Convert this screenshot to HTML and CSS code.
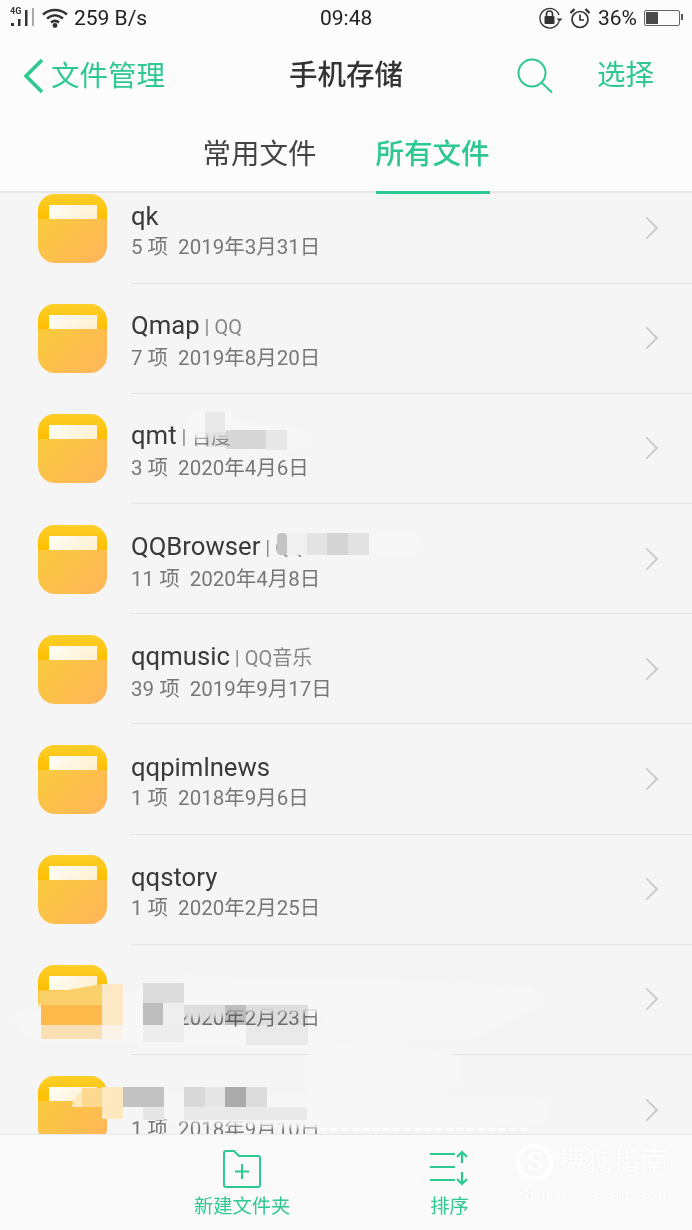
FILE: index.html
```html
<!DOCTYPE html>
<html lang="zh-CN">

<head>
    <meta charset="UTF-8">
    <meta name="viewport" content="width=device-width, initial-scale=1.0">
    <title>手机存储</title>

    <link rel="stylesheet" href="styles.css">
</head>

<body>
    <div class="page">
        <header class="top">
            <div class="status">
                <div class="status-left">
                    <svg width="26" height="22" viewBox="0 0 26 22">
                        <text x="0" y="7" class="net">4G</text>
                        <rect x="1" y="16" width="3" height="3" fill="#333"/>
                        <rect x="8" y="12" width="2.500" height="7" fill="#333"/>
                        <rect x="15" y="3" width="2.500" height="16" fill="#333"/>
                        <rect x="22" y="1" width="2" height="18" fill="#aaa"/>
                    </svg>
                    <svg width="26" height="20" viewBox="0 0 26 20" fill="none" stroke="#333" stroke-width="2.500">
                        <path d="M1 6.500C8 .5 18 .5 25 6.500"/>
                        <path d="M5 10.500C10 6.500 16 6.500 21 10.500"/>
                        <path d="M9 14.500C11.500 12.500 14.500 12.500 17 14.500"/>
                        <circle cx="13" cy="17.500" r="1.200" fill="#333"/>
                    </svg>
                    <span>259 B/s</span>
                </div>
                <span class="clock">09:48</span>
                <div class="status-right">
                    <svg class="ico-lock" width="24" height="22" viewBox="0 0 24 22" fill="none" stroke="#333" stroke-width="1.300">
                        <path d="M20 14.500A9.800 9.800 0 1 1 20 8"/>
                        <path d="M17.500 11.500h6l-3 3.200z" fill="#333" stroke="none"/>
                        <rect x="5.500" y="9" width="10" height="8" rx="1" fill="#333" stroke="none"/>
                        <path d="M7.500 9V7a3 3 0 0 1 6 0V9" stroke-width="1.600"/>
                    </svg>
                    <svg class="ico-alarm" width="22" height="22" viewBox="0 0 22 22" fill="none" stroke="#333" stroke-width="1.700">
                        <circle cx="11" cy="12.500" r="8"/>
                        <path d="M11 7.500v5.500h4"/>
                        <path d="M1.500 6L5.500 2M20.500 6L16.500 2" stroke-width="2.400"/>
                    </svg>
                    <span class="battery-text">36%</span>
                    <div class="battery">
                        <div class="battery-level"></div>
                    </div>
                </div>
            </div>

            <nav class="nav">
                <div class="back">
                    <svg width="22" height="36" viewBox="0 0 22 36" fill="none" stroke="#2ec890" stroke-width="3.600">
                        <path d="M20 2L4 18L20 34"/>
                    </svg>
                    <span>文件管理</span>
                </div>
                <h1 class="title">手机存储</h1>
                <div class="actions">
                    <svg width="36" height="36" viewBox="0 0 36 36" fill="none" stroke="#2ec890" stroke-width="2">
                        <circle cx="15" cy="15" r="13.500"/>
                        <path d="M24.500 24.500L35 34.500"/>
                    </svg>
                    <span>选择</span>
                </div>
            </nav>

            <div class="tabs">
                <span class="tab">常用文件</span>
                <span class="tab tab-on">所有文件</span>
            </div>
        </header>

        <main class="list">
            <div class="rows">
                <div class="row">
                    <div class="folder"><div class="paper"></div></div>
                    <div class="info">
                        <div class="text">
                            <div class="name">qk</div>
                            <div class="meta"><span>5 项</span><span>2019年3月31日</span></div>
                        </div>
                        <div class="arrow"></div>
                    </div>
                </div>
                <div class="row">
                    <div class="folder"><div class="paper"></div></div>
                    <div class="info">
                        <div class="text">
                            <div class="name">Qmap<small>| QQ</small></div>
                            <div class="meta"><span>7 项</span><span>2019年8月20日</span></div>
                        </div>
                        <div class="arrow"></div>
                    </div>
                </div>
                <div class="row">
                    <div class="folder"><div class="paper"></div></div>
                    <div class="info">
                        <div class="text">
                            <div class="name">qmt<small>| 百度</small></div>
                            <div class="meta"><span>3 项</span><span>2020年4月6日</span></div>
                        </div>
                        <div class="arrow"></div>
                    </div>
                </div>
                <div class="row">
                    <div class="folder"><div class="paper"></div></div>
                    <div class="info">
                        <div class="text">
                            <div class="name">QQBrowser<small>| QQ</small></div>
                            <div class="meta"><span>11 项</span><span>2020年4月8日</span></div>
                        </div>
                        <div class="arrow"></div>
                    </div>
                </div>
                <div class="row">
                    <div class="folder"><div class="paper"></div></div>
                    <div class="info">
                        <div class="text">
                            <div class="name">qqmusic<small>| QQ音乐</small></div>
                            <div class="meta"><span>39 项</span><span>2019年9月17日</span></div>
                        </div>
                        <div class="arrow"></div>
                    </div>
                </div>
                <div class="row">
                    <div class="folder"><div class="paper"></div></div>
                    <div class="info">
                        <div class="text">
                            <div class="name">qqpimlnews</div>
                            <div class="meta"><span>1 项</span><span>2018年9月6日</span></div>
                        </div>
                        <div class="arrow"></div>
                    </div>
                </div>
                <div class="row">
                    <div class="folder"><div class="paper"></div></div>
                    <div class="info">
                        <div class="text">
                            <div class="name">qqstory</div>
                            <div class="meta"><span>1 项</span><span>2020年2月25日</span></div>
                        </div>
                        <div class="arrow"></div>
                    </div>
                </div>
                <div class="row">
                    <div class="folder"><div class="paper"></div></div>
                    <div class="info">
                        <div class="text">
                            <div class="name">&nbsp;</div>
                            <div class="meta"><span>1 项</span><span>2020年2月23日</span></div>
                        </div>
                        <div class="arrow"></div>
                    </div>
                </div>
                <div class="row">
                    <div class="folder"><div class="paper"></div></div>
                    <div class="info">
                        <div class="text">
                            <div class="name">&nbsp;</div>
                            <div class="meta"><span>1 项</span><span>2018年9月10日</span></div>
                        </div>
                        <div class="arrow"></div>
                    </div>
                </div>
            </div>
        </main>

        <footer class="bottom">
            <div class="tool">
                <svg width="40" height="40" viewBox="0 0 40 40" fill="none" stroke="#2ec890" stroke-width="2">
                    <path d="M2 4a2 2 0 0 1 2-2h8l5 5h19a2 2 0 0 1 2 2v27a2 2 0 0 1-2 2H4a2 2 0 0 1-2-2z"/>
                    <path d="M20 15v15M13 22.500h14"/>
                </svg>
                <span>新建文件夹</span>
            </div>
            <div class="tool">
                <svg width="40" height="40" viewBox="0 0 40 40" fill="none" stroke="#2ec890" stroke-width="2.200">
                    <path d="M1 5h25M1 18h25M1 31h25"/>
                    <path d="M33 14V3M28 8l5-5 5 5"/>
                    <path d="M33 23v12M28 30l5 5 5-5"/>
                </svg>
                <span>排序</span>
            </div>
        </footer>

        <!-- tapas de privacidad -->
        <svg class="smear" width="692" height="1134" viewBox="0 0 692 1134">
            <defs>
                <filter id="soft"><feGaussianBlur stdDeviation="2.500"/></filter>
            </defs>
            <g fill="#f7f7f7" filter="url(#soft)">
                <path d="M190 412H232V437H190Q184 425 190 412z"/>
                <path d="M230 420L300 430Q312 440 300 450L230 448z"/>
                <path d="M370 532H415Q425 543 415 556H370z"/>
                <path d="M14 1018Q30 1000 110 995L178 985V1042H40Q14 1035 14 1018z"/>
                <path d="M178 975L530 985Q548 1000 530 1012H225V1017H178z"/>
                <path d="M320 1012H530L470 1040H320z"/>
                <path d="M178 1031H320V1046H178z"/>
                <path d="M310 1040L450 1052Q476 1070 450 1090L310 1094z"/>
                <path d="M164 1094L540 1096Q560 1110 540 1125L320 1128L164 1121z"/>
            </g>
            <rect x="277" y="533" width="10" height="22" rx="4" fill="#c4c4c4"/>
            <rect x="287" y="533" width="20" height="22" fill="#f0f0f0"/>
            <rect x="307" y="533" width="20" height="22" fill="#e4e4e4"/>
            <rect x="327" y="533" width="21" height="22" fill="#d4d4d4"/>
            <rect x="348" y="533" width="21" height="22" fill="#e2e2e2"/>
            <rect x="143" y="983" width="41" height="20" fill="#dcdcdc"/>
            <rect x="143" y="1003" width="20" height="22" fill="#bdbdbd"/>
            <rect x="163" y="1003" width="21" height="22" fill="#eeeeee"/>
            <rect x="143" y="1025" width="41" height="17" fill="#ededed"/>
            <rect x="123" y="1087" width="41" height="20" fill="#c2c2c2"/>
            <rect x="184" y="1087" width="21" height="20" fill="#d8d8d8"/>
            <rect x="205" y="1087" width="20" height="20" fill="#e6e6e6"/>
            <rect x="225" y="1087" width="21" height="20" fill="#ababab"/>
            <rect x="246" y="1087" width="21" height="20" fill="#dcdcdc"/>
            <rect x="143" y="1107" width="21" height="13" fill="#e6e6e6"/>
            <rect x="184" y="1107" width="123" height="13" fill="#e9e9e9"/>
            <rect x="41" y="1005" width="61" height="20" fill="#fdb94a"/>
            <rect x="41" y="1025" width="61" height="14" fill="#fbdfb4"/>
            <rect x="102" y="984" width="21" height="41" fill="#fde8c6"/>
            <rect x="102" y="1025" width="21" height="15" fill="#faf4e8"/>
            <path d="M39 991H62L102 984V1005H41V1001H39z" fill="#fbcf6a"/>
            <path d="M72 1107Q74 1089 95 1088H102V1107z" fill="#fde9bd"/>
            <path d="M82 1088H102V1107H82z" fill="#fdd98f"/>
            <path d="M102 1087H123V1119H102z" fill="#fde8c0"/>
            <path d="M320 1129H530" stroke="#fff" stroke-width="2.500" stroke-dasharray="7 3.500"/>
        </svg>

        <!-- estas dejan ver el texto de abajo -->
        <svg class="smear tint" width="692" height="1134" viewBox="0 0 692 1134">
            <rect x="205" y="412" width="20" height="20" fill="#f1f1f1"/>
            <rect x="205" y="432" width="21" height="15" fill="#ececec"/>
            <rect x="226" y="430" width="40" height="19" fill="#dedede"/>
            <rect x="266" y="430" width="21" height="20" fill="#efefef"/>
            <rect x="184" y="1005" width="41" height="20" fill="#e6e6e6"/>
            <rect x="225" y="1005" width="21" height="20" fill="#c4c4c4"/>
            <rect x="246" y="1005" width="62" height="20" fill="#e6e6e6"/>
            <rect x="246" y="1025" width="62" height="20" fill="#f2f2f2"/>
        </svg>

        <div class="mark">
            <div class="mark-top">
                <span class="mark-logo">S</span>
                <span>搜狗指南</span>
            </div>
            <div class="mark-url">zhinan.sogou.com</div>
        </div>
    </div>
</body>

</html>
```

FILE: styles.css
```css
* {
    box-sizing: border-box;
}

body {
    margin: 0;
    background-color: #f5f5f5;
    font-family: Roboto, "Noto Sans CJK SC", sans-serif;
}

.page {
    position: relative;
    width: 692px;
    height: 1230px;
    display: flex;
    flex-direction: column;
    overflow: hidden;
}

.top {
    background-color: #fcfcfc;
    border-bottom: 2px solid #e6e6e6;
    height: 193px;
    flex: none;
}

.status {
    height: 36px;
    padding: 0 12px 0 10px;
    display: flex;
    align-items: center;
    justify-content: space-between;
    position: relative;
    color: #222;
    font-size: 21px;
}

.status-left,
.status-right {
    display: flex;
    align-items: center;
}

.status-left svg {
    margin-right: 6px;
}

.net {
    font-size: 9px;
    font-weight: 700;
    fill: #333;
}

.clock {
    position: absolute;
    left: 320px;
    top: 6px;
}

.ico-lock {
    margin-right: 6px;
}

.ico-alarm {
    margin-right: 7px;
}

.battery-text {
    margin-right: 7px;
}

.battery {
    width: 36px;
    height: 16px;
    border: 1.500px solid #666;
    border-radius: 2px;
    padding: 1px;
    position: relative;
}

.battery::after {
    content: "";
    position: absolute;
    right: -4px;
    top: 3px;
    width: 2px;
    height: 6px;
    background-color: #555;
}

.battery-level {
    width: 12px;
    height: 100%;
    background-color: #4a4a4a;
}

.nav {
    height: 80px;
    padding: 0 38px 0 22px;
    display: flex;
    align-items: center;
    position: relative;
    color: #2ec890;
    font-size: 28.500px;
}

.back {
    display: flex;
    align-items: center;
    gap: 7px;
    line-height: 36px;
}

.back span {
    padding-top: 2px;
}

.title {
    position: absolute;
    left: 289px;
    top: 0;
    margin: 0;
    line-height: 80px;
    font-size: 28.500px;
    font-weight: 500;
    color: #333;
}

.actions {
    margin-left: auto;
    display: flex;
    align-items: center;
    gap: 44px;
    line-height: 36px;
}

.tabs {
    height: 75px;
    display: flex;
    justify-content: center;
    gap: 59px;
    font-size: 28.500px;
    color: #444;
}

.tab {
    height: 78px;
    padding-top: 16px;
    line-height: 46px;
}

.tab-on {
    color: #2ec890;
    font-weight: 500;
    border-bottom: 3px solid #2ec890;
    position: relative;
}

.list {
    flex: 1;
    overflow: hidden;
    min-height: 0;
}

.rows {
    margin-top: -19.600px;
}

.row {
    height: 110.200px;
    padding-left: 38px;
    display: flex;
    align-items: center;
}

.folder {
    width: 69px;
    height: 69px;
    flex: none;
    border-radius: 17px;
    position: relative;
    overflow: hidden;
    background: linear-gradient(135deg, #f8d036, #ffb45a);
}

.folder::before {
    content: "";
    position: absolute;
    left: 0;
    top: 0;
    width: 100%;
    height: 25px;
    background: linear-gradient(#fccf2a, #ffbe00);
}

.paper {
    position: absolute;
    left: 11px;
    top: 11px;
    width: 48px;
    height: 14px;
    background: linear-gradient(135deg, #fffdf7, #fff0cf);
}

.info {
    flex: 1;
    height: 100%;
    margin-left: 24px;
    padding-right: 37px;
    border-bottom: 1px solid #e4e4e4;
    display: flex;
    align-items: center;
    justify-content: space-between;
}

.text {
    padding-top: 5px;
}

.name {
    font-size: 25.700px;
    line-height: 32px;
    color: #3a3a3a;
}

.name small {
    font-size: 20px;
    color: #888;
    margin-left: 5px;
}

.meta {
    margin-top: 1px;
    font-size: 20.500px;
    line-height: 28px;
    color: #777;
    display: flex;
    gap: 10px;
}

.arrow {
    width: 16px;
    height: 16px;
    border-top: 2.500px solid #ccc;
    border-right: 2.500px solid #ccc;
    transform: rotate(45deg);
}

.bottom {
    height: 96px;
    flex: none;
    background-color: #fafafa;
    border-top: 1px solid #e8e8e8;
    position: relative;
    z-index: 2;
    display: flex;
    padding-left: 194px;
    gap: 139px;
    padding-top: 14px;
}

.tool {
    display: flex;
    flex-direction: column;
    align-items: center;
    gap: 4px;
    color: #2ec890;
    font-size: 19.300px;
    line-height: 28px;
}

.smear {
    position: absolute;
    left: 0;
    top: 0;
    z-index: 1;
}

.tint {
    mix-blend-mode: multiply;
}

.mark {
    position: absolute;
    left: 516px;
    top: 1143px;
    z-index: 3;
    color: #fff;
    text-shadow: 0 0 2px rgba(0, 0, 0, 0.06);
}

.mark-top {
    display: flex;
    align-items: center;
    gap: 5px;
    font-size: 27.500px;
    line-height: 38px;
}

.mark-logo {
    width: 37px;
    height: 37px;
    border: 4px solid #fff;
    border-radius: 50%;
    font-size: 27px;
    font-weight: 700;
    line-height: 29px;
    text-align: center;
}

.mark-url {
    margin-top: 5px;
    font-size: 15.500px;
    letter-spacing: 1.900px;
    line-height: 18px;
}
```
